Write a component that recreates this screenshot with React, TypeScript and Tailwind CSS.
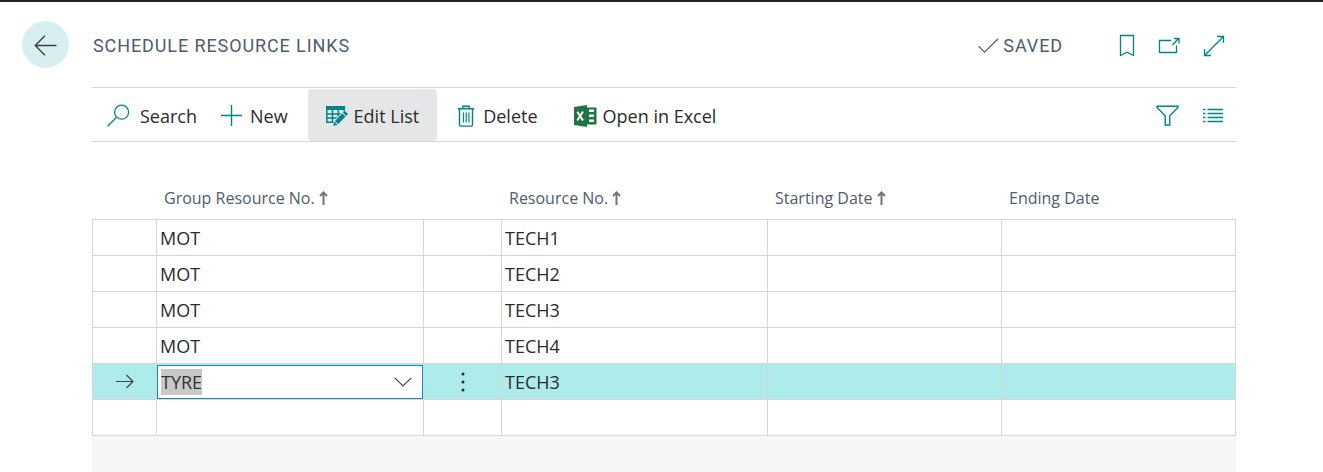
import { useEffect, useRef } from "react";
import type { ReactNode } from "react";

const rows = [
  { group: "MOT", resource: "TECH1" },
  { group: "MOT", resource: "TECH2" },
  { group: "MOT", resource: "TECH3" },
  { group: "MOT", resource: "TECH4" },
  { group: "TYRE", resource: "TECH3", current: true },
  { group: "", resource: "" },
];

const TEAL = "#00848a";

function Icon({
  w,
  h,
  color = TEAL,
  stroke = 1.3,
  children,
}: {
  w: number;
  h: number;
  color?: string;
  stroke?: number;
  children: ReactNode;
}) {
  return (
    <svg
      width={w}
      height={h}
      viewBox={`0 0 ${w} ${h}`}
      fill="none"
      stroke={color}
      strokeWidth={stroke}
      aria-hidden="true"
      className="shrink-0"
    >
      {children}
    </svg>
  );
}

const BackIcon = () => (
  <Icon w={24} h={22} color="#3c3c3c">
    <path d="M22.5 11.5H1.5M11 1.700 1.200 11.500l9.800 9.800" />
  </Icon>
);

const CheckIcon = () => (
  <Icon w={21} h={17} color="#505c6d" stroke={1.2}>
    <path d="M.6 9.2 6.5 15.2 20.2 1.8" />
  </Icon>
);

const BookmarkIcon = () => (
  <Icon w={16} h={23}>
    <path d="M1.5 1.5h13v20L8 18.200l-6.500 3.300z" />
  </Icon>
);

const PopOutIcon = () => (
  <Icon w={22} h={17}>
    <path d="M13 3.500H1.500v12h17V8.500M14.500 8 20.500 1.500M16 1.500h5v5" />
  </Icon>
);

const ExpandIcon = () => (
  <Icon w={22} h={22}>
    <path d="M1.5 20.5 20.5 1.5M14 1.500h6.500V8M1.500 14v6.500H8" />
  </Icon>
);

const SearchIcon = () => (
  <Icon w={23} h={23}>
    <circle cx="14.6" cy="8.2" r="7" />
    <path d="M9.6 13.2.6 22.2" />
  </Icon>
);

const PlusIcon = () => (
  <Icon w={21} h={21} stroke={1.4}>
    <path d="M10.5 0v21M0 10.5h21" />
  </Icon>
);

const EditListIcon = () => (
  <Icon w={22} h={20}>
    <path d="M0 0h19v4H0z" fill={TEAL} stroke="none" />
    <path d="M.8 3v13.2h10M.8 8h16.5M.8 12h12M6.5 3v13M12.3 3v9.5M18.2 3v4" strokeWidth="1.5" />
    <path d="M18.5 4.500 22 8 11.500 19h-4v-4z" fill="#e5e6e8" stroke="none" />
    <path d="M18.800 4.800 22 7.900 20.200 9.900 16.900 6.700z" fill={TEAL} stroke="none" />
    <path d="M16.200 7.400 19.500 10.600 12.300 18.100 8.900 14.900z" fill={TEAL} stroke="none" />
    <path d="M8.300 15.600 11.500 18.700 7.300 20z" fill={TEAL} stroke="none" />
  </Icon>
);

const TrashIcon = () => (
  <Icon w={18} h={22} stroke={1.4}>
    <path d="M.8 3.8h16.4M5.8 3.5V1.2h6.4v2.3M2.500 4v15.8c0 .8.500 1.300 1.300 1.300h10.400c.8 0 1.300-.5 1.300-1.300V4" />
    <path d="M6.500 7.500v10M9.200 7.500v10M11.900 7.500v10" strokeWidth="1.2" />
  </Icon>
);

const ExcelIcon = () => (
  <Icon w={23} h={22} stroke={0}>
    <path d="M12 2.500h10.500v17H12z" fill="#217346" />
    <path d="M0 2 13 0v22L0 20z" fill="#217346" />
    <path d="M15 4.500h5V7h-5zM15 9.500h5V12h-5zM15 14.500h5V17h-5z" fill="#fff" />
    <path d="M3.300 6.800 9 15.500M9 6.500 3.300 15.500" stroke="#fff" strokeWidth="2" />
  </Icon>
);

const FilterIcon = () => (
  <Icon w={23} h={21} stroke={1.4}>
    <path d="M1 1.200h21v1.300l-8.200 8.300V20H9.200v-9.200L1 2.500z" />
  </Icon>
);

const ListIcon = () => (
  <Icon w={20} h={16} stroke={1.4}>
    <path d="M0 1.500h2.500M4.500 1.500H20M0 5.500h2.500M4.500 5.500H20M0 9.500h2.500M4.500 9.500H20M0 13.500h2.500M4.500 13.500H20" />
  </Icon>
);

const SortIcon = () => (
  <Icon w={9} h={14} color="#757575" stroke={2}>
    <path d="M4.500 14V2M1 5 4.500 1.500 8 5" />
  </Icon>
);

const RowArrowIcon = () => (
  <Icon w={18} h={15} color="#444" stroke={1.2}>
    <path d="M0 7.500h17M10.500 1 17 7.500l-6.500 6.500" />
  </Icon>
);

const ChevronIcon = () => (
  <Icon w={18} h={10} color="#444" stroke={1.2}>
    <path d="M.8.800 9 9 17.200.800" />
  </Icon>
);

const DotsIcon = () => (
  <svg width="4" height="20" viewBox="0 0 4 20" fill="#222" aria-hidden="true">
    <circle cx="2" cy="2" r="1.5" />
    <circle cx="2" cy="10" r="1.5" />
    <circle cx="2" cy="18" r="1.5" />
  </svg>
);

function Heading({ label, sorted }: { label: string; sorted?: boolean }) {
  return (
    <th scope="col" className="pt-[34px] pl-2 text-left font-normal">
      <span className="flex items-center gap-1 whitespace-nowrap">
        {label}
        {sorted && <SortIcon />}
      </span>
    </th>
  );
}

function GroupInput({ value }: { value: string }) {
  const ref = useRef<HTMLInputElement>(null);
  useEffect(() => {
    ref.current?.focus();
    ref.current?.select();
  }, []);
  return (
    <div className="mt-px flex h-[34px] items-center border border-[#0090d1] bg-white pr-2.5 pl-[3px]">
      <input
        ref={ref}
        aria-label="Group Resource No."
        defaultValue={value}
        className="h-[26px] min-w-0 flex-1 leading-[26px] outline-none selection:bg-[#c8c8c8] selection:text-[#333]"
      />
      <button type="button" aria-label="Choose a value">
        <ChevronIcon />
      </button>
    </div>
  );
}

export default function App() {
  return (
    <div className="flex min-h-screen flex-col border-t-2 border-[#252423] bg-white font-['Open_Sans',sans-serif] text-lg text-[#2b2b2b]">
      <header className="flex h-[85px] items-center pr-[98px] pl-[22px] font-[Roboto,sans-serif] text-[#505c6d]">
        <button
          type="button"
          aria-label="Back"
          className="mr-6 flex size-[47px] items-center justify-center rounded-full bg-[#d8eff1]"
        >
          <BackIcon />
        </button>
        <div className="flex flex-1 items-center pt-0.5">
          <h1 className="tracking-wider">SCHEDULE RESOURCE LINKS</h1>
          <div className="ml-auto flex items-center gap-1 tracking-wider">
            <CheckIcon />
            <span>SAVED</span>
          </div>
          <div className="ml-14 flex items-center gap-[23px]">
            <button type="button" aria-label="Bookmark"><BookmarkIcon /></button>
            <button type="button" aria-label="Open in new window"><PopOutIcon /></button>
            <button type="button" aria-label="Expand"><ExpandIcon /></button>
          </div>
        </div>
      </header>

      <main className="mr-[87px] ml-[92px] flex flex-1 flex-col">
        <div
          role="toolbar"
          className="flex h-[55px] items-stretch border-y border-[#d4d6d9] whitespace-nowrap [&_button]:pt-0.5"
        >
          <button type="button" className="flex items-center gap-2.5 pl-[15px]"><SearchIcon />Search</button>
          <button type="button" className="flex items-center gap-2 pl-6"><PlusIcon />New</button>
          <button type="button" className="mt-px ml-5 flex items-center gap-1.5 rounded bg-[#e5e6e8] px-[18px]">
            <EditListIcon />Edit List
          </button>
          <button type="button" className="flex items-center gap-2 pl-5"><TrashIcon />Delete</button>
          <button type="button" className="flex items-center gap-1.5 pl-9"><ExcelIcon />Open in Excel</button>
          <div className="ml-auto flex items-center gap-6 pr-[13px]">
            <button type="button" aria-label="Filter"><FilterIcon /></button>
            <button type="button" aria-label="List view"><ListIcon /></button>
          </div>
        </div>

        <table className="w-full table-fixed border-separate border-spacing-0">
          <colgroup>
            <col className="w-16" />
            <col className="w-[267px]" />
            <col className="w-[78px]" />
            <col className="w-[266px]" />
            <col className="w-[234px]" />
            <col />
          </colgroup>
          <thead>
            <tr className="h-[77px] text-base text-[#505c6d]">
              <td />
              <Heading label="Group Resource No." sorted />
              <td />
              <Heading label="Resource No." sorted />
              <Heading label="Starting Date" sorted />
              <Heading label="Ending Date" />
            </tr>
          </thead>
          <tbody className="[&_td]:h-9 [&_td]:border-t [&_td]:border-l [&_td]:border-[#d4d6d9] [&_td:last-child]:border-r [&_tr:last-child_td]:h-[37px] [&_tr:last-child_td]:border-b">
            {rows.map((row, i) => (
              <tr key={i} className={row.current ? "bg-[#aeebeb]" : "bg-white"}>
                <td>
                  {row.current && <span className="flex justify-center"><RowArrowIcon /></span>}
                </td>
                {row.current ? (
                  <td className="p-0"><GroupInput value={row.group} /></td>
                ) : (
                  <td className="py-0 pl-[3px]">{row.group}</td>
                )}
                <td>
                  {row.current && (
                    <button type="button" aria-label="Show more options" className="flex w-full justify-center">
                      <DotsIcon />
                    </button>
                  )}
                </td>
                <td className="py-0 pl-[3px]">{row.resource}</td>
                <td />
                <td />
              </tr>
            ))}
          </tbody>
        </table>
        <div className="flex-1 bg-[#f5f6f8]" />
      </main>
    </div>
  );
}
